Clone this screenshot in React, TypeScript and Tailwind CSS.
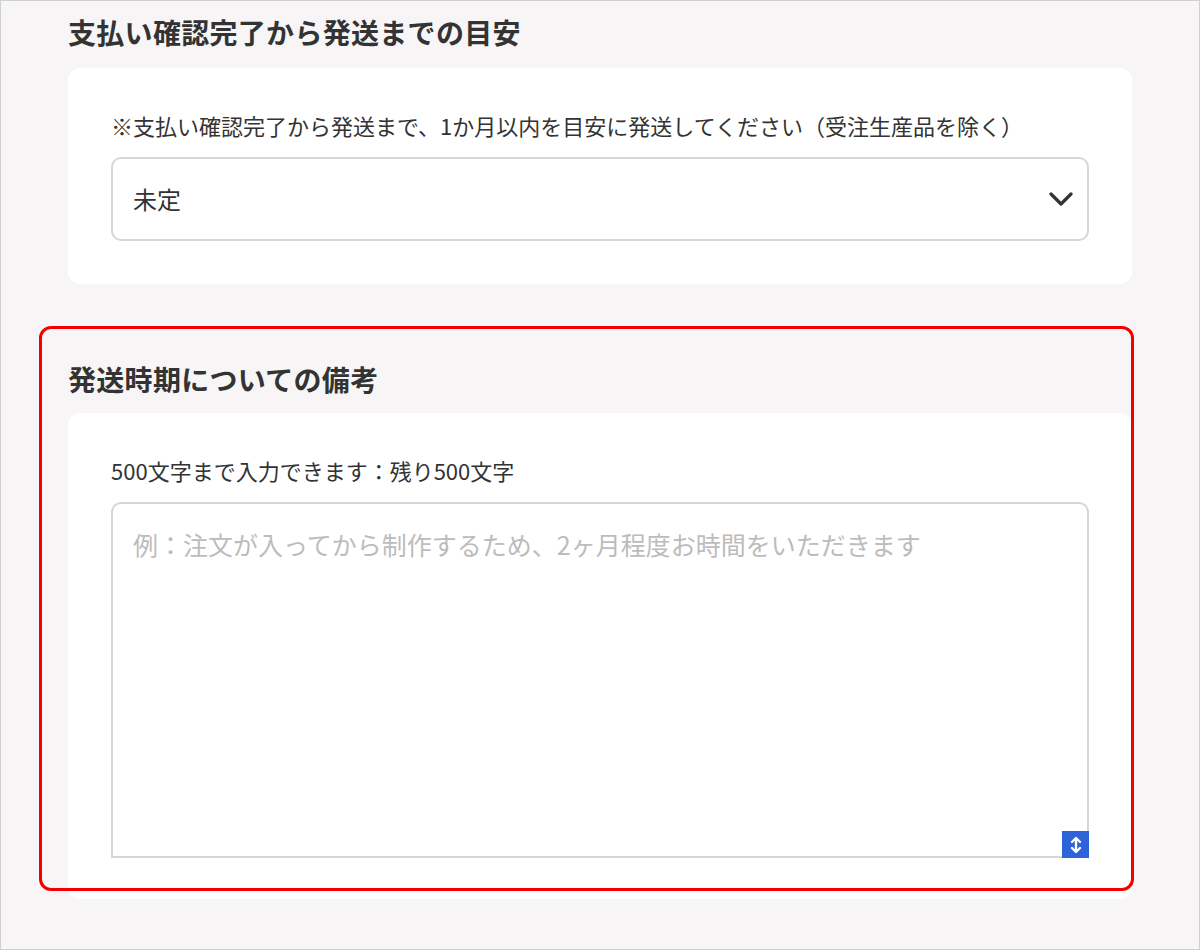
import React from 'react';

const font = { fontFamily: '"Noto Sans CJK JP", "Noto Sans", sans-serif' };

const ChevronDown = () => (
  <svg width="24" height="14" viewBox="0 0 24 14" fill="none">
    <path d="M2 2l10 10L22 2" stroke="#333" strokeWidth="3.2" strokeLinecap="round" strokeLinejoin="round" />
  </svg>
);

const ResizeHandle = () => (
  <div className="absolute -right-[2px] -bottom-[2px] flex h-[27px] w-[27px] items-center justify-center bg-[#2d62d8]">
    <svg width="12" height="18" viewBox="0 0 12 18" fill="none">
      <path d="M6 3v12" stroke="#fff" strokeWidth="2.4" strokeLinecap="round" />
      <path d="M2 6l4-4 4 4M2 12l4 4 4-4" stroke="#fff" strokeWidth="2.4" strokeLinecap="round" strokeLinejoin="round" />
    </svg>
  </div>
);

const App: React.FC = () => {
  return (
    <div style={font} className="relative h-[950px] w-[1200px] overflow-hidden border border-[#cfcfcf] bg-[#f7f5f6] px-[67px] text-[#333]">
      <h2 className="pt-[11px] text-[28px] leading-[40px] font-bold tracking-[0.3px] text-[#333]">
        支払い確認完了から発送までの目安
      </h2>
      <div className="mt-[16px] rounded-[12px] bg-white px-[43px] pt-[40px] pb-[43px]">
        <p className="text-[22px] leading-[34px]">
          ※支払い確認完了から発送まで、1か月以内を目安に発送してください（受注生産品を除く）
        </p>
        <div className="mt-[15px] flex h-[84px] items-center justify-between rounded-[10px] border-2 border-[#d6d6d6] pr-[14px] pl-[20px]">
          <span className="text-[24px]">未定</span>
          <ChevronDown />
        </div>
      </div>

      <h2 className="mt-[75px] text-[28px] leading-[40px] font-bold tracking-[0.3px] text-[#333]">
        発送時期についての備考
      </h2>
      <div className="mt-[14px] rounded-[12px] bg-white px-[43px] pt-[40px] pb-[41px]">
        <p className="text-[22px] leading-[34px]">500文字まで入力できます：残り500文字</p>
        <div className="relative mt-[15px] h-[356px] rounded-t-[10px] border-2 border-[#d6d6d6]">
          <textarea
            className="h-full w-full resize-none bg-transparent px-[20px] pt-[22px] text-[25px] leading-[36px] outline-none placeholder:text-[#bcbcbc]"
            style={font}
            placeholder="例：注文が入ってから制作するため、2ヶ月程度お時間をいただきます"
          />
          <ResizeHandle />
        </div>
      </div>

      {/* annotation highlight */}
      <div className="pointer-events-none absolute top-[325px] left-[38px] h-[565px] w-[1095px] rounded-[12px] border-[3px] border-[#f50000]" />
    </div>
  );
};

export default App;
